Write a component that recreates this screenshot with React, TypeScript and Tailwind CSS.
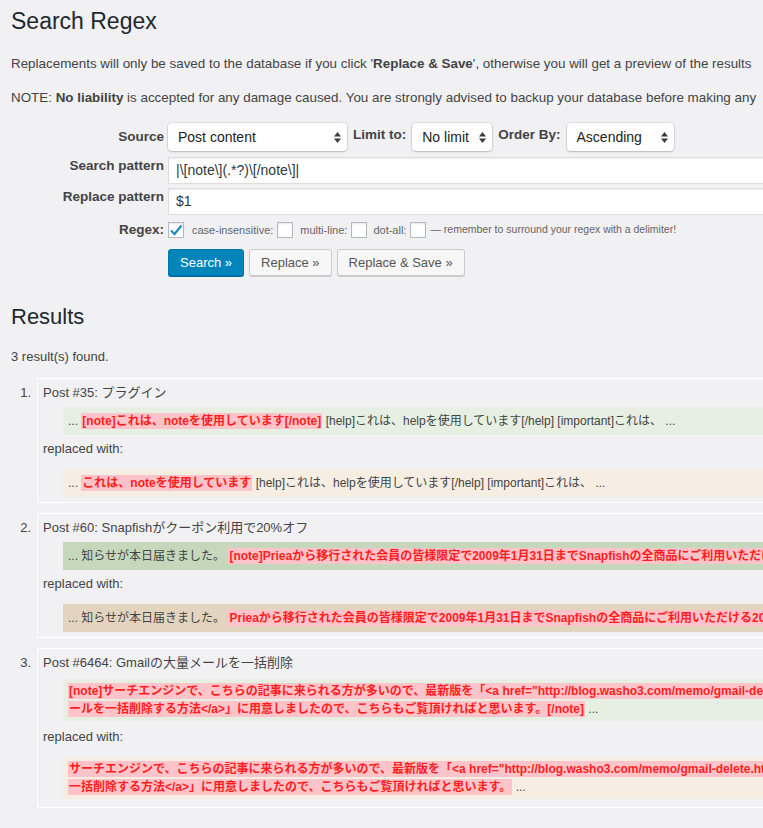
import React from "react";

function Arrows() {
  return (
    <svg width="7" height="11" viewBox="0 0 7 11" className="shrink-0">
      <polygon points="0,4.5 3.5,0 7,4.5" fill="#3a3a3a" />
      <polygon points="0,6.5 3.5,11 7,6.5" fill="#3a3a3a" />
    </svg>
  );
}

function Select({ value, width }: { value: string; width: string }) {
  return (
    <div
      className={`flex h-[28px] ${width} items-center justify-between rounded-[4px] bg-white pl-[10px] pr-[6px] text-[14px] text-[#222] shadow-[0_0_0_1px_rgba(0,0,0,0.07),0_1px_2px_rgba(0,0,0,0.18)]`}
    >
      <span>{value}</span>
      <Arrows />
    </div>
  );
}

function Checkbox({ checked }: { checked?: boolean }) {
  return (
    <div className="flex h-[16px] w-[16px] shrink-0 items-center justify-center border border-[#b4b9be] bg-white shadow-[inset_0_1px_2px_rgba(0,0,0,0.1)]">
      {checked && (
        <svg width="14" height="14" viewBox="0 0 14 14">
          <path d="M2 7.5 L5.5 11 L12.5 2.5" fill="none" stroke="#1e8cbe" strokeWidth="2.2" />
        </svg>
      )}
    </div>
  );
}

function Hit({ children }: { children: React.ReactNode }) {
  return (
    <span className="bg-[#ffc3ca] px-[1px] py-[1px] font-bold text-[#ff1e1e] [box-decoration-break:clone]">
      {children}
    </span>
  );
}

function Result({
  num,
  title,
  search,
  replace,
  searchBg,
  replaceBg,
  tall,
}: {
  num: string;
  title: string;
  search: React.ReactNode;
  replace: React.ReactNode;
  searchBg: string;
  replaceBg: string;
  tall?: boolean;
}) {
  const row = tall ? "py-[3px] leading-[18px]" : "py-[4px] leading-[20px]";
  return (
    <div className="flex">
      <div className="w-[26px] shrink-0 pr-[6px] pt-[5px] text-right text-[13px] leading-[20px]">{num}</div>
      <div className={`w-[1150px] border border-white px-[5px] pt-[4px] ${tall ? "pb-[8px]" : "pb-[5px]"}`}>
        <div className="text-[13px] leading-[20px]">{title}</div>
        <div
          className={`${tall ? "mt-[6px]" : "mt-[4px]"} ml-[20px] whitespace-nowrap pl-[5px] text-[12px] ${row} ${searchBg}`}
        >
          {search}
        </div>
        <div className={`${tall ? "mt-[6px]" : "mt-[4px]"} text-[13px] leading-[20px]`}>replaced with:</div>
        <div className={`mt-[10px] ml-[20px] whitespace-nowrap pl-[5px] text-[12px] ${row} ${replaceBg}`}>
          {replace}
        </div>
      </div>
    </div>
  );
}

export default function App() {
  return (
    <div className="min-h-[828px] w-full overflow-hidden bg-[#f1f0f3] font-['Liberation_Sans','Noto_Sans_CJK_JP',sans-serif] text-[#444]">
      <div className="w-[1250px] pl-[11px] pt-[6px] pb-[20px]">
        <h1 className="text-[23px] leading-[30px] font-normal text-[#23282d]">Search Regex</h1>

        <p className="mt-[18px] text-[13.4px] leading-[20px]">
          Replacements will only be saved to the database if you click '<b>Replace &amp; Save</b>', otherwise you
          will get a preview of the results
        </p>
        <p className="mt-[14px] text-[13.4px] leading-[20px]">
          NOTE: <b>No liability</b> is accepted for any damage caused. You are strongly advised to backup your
          database before making any
        </p>

        <div className="mt-[15px] grid grid-cols-[153px_1fr] gap-x-[4px]">
          <div className="flex h-[28px] items-center justify-end text-[13.5px] font-bold">Source</div>
          <div className="flex items-center gap-[6px]">
            <Select value="Post content" width="w-[179px]" />
            <span className="pb-[3px] text-[13.5px] font-bold">Limit to:</span>
            <Select value="No limit" width="w-[80px]" />
            <span className="pb-[3px] text-[13.5px] font-bold">Order By:</span>
            <Select value="Ascending" width="w-[107px]" />
          </div>

          <div className="mt-[6px] pt-[1px] text-right text-[13.5px] leading-[16px] font-bold">Search pattern</div>
          <div className="mt-[6px] flex h-[27px] w-[900px] items-center border border-[#ddd] bg-white pl-[7px] text-[14px] text-[#32373c] shadow-[inset_0_1px_2px_rgba(0,0,0,0.07)]">
            |\[note\](.*?)\[/note\]|
          </div>

          <div className="mt-[4px] pt-[1px] text-right text-[13.5px] leading-[16px] font-bold">Replace pattern</div>
          <div className="mt-[4px] flex h-[27px] w-[900px] items-center border border-[#ddd] bg-white pl-[7px] text-[14px] text-[#32373c] shadow-[inset_0_1px_2px_rgba(0,0,0,0.07)]">
            $1
          </div>

          <div className="mt-[7px] flex h-[16px] items-center justify-end text-[13.5px] font-bold">Regex:</div>
          <div className="mt-[7px] flex h-[16px] items-center text-[11px] text-[#666]">
            <Checkbox checked />
            <span className="ml-[8px] mr-[4px]">case-insensitive:</span>
            <Checkbox />
            <span className="ml-[7px] mr-[4px]">multi-line:</span>
            <Checkbox />
            <span className="ml-[6px] mr-[4px]">dot-all:</span>
            <Checkbox />
            <span className="ml-[4px] text-[10.5px]">— remember to surround your regex with a delimiter!</span>
          </div>

          <div />
          <div className="mt-[11px] flex gap-[5px] text-[13px]">
            <button className="h-[27px] rounded-[3px] border border-[#0073aa] bg-[#0085ba] px-[11px] text-white shadow-[0_1px_0_#006799]">
              Search »
            </button>
            <button className="h-[27px] rounded-[3px] border border-[#ccc] bg-[#f7f7f7] px-[11px] text-[#555] shadow-[0_1px_0_#ccc]">
              Replace »
            </button>
            <button className="h-[27px] rounded-[3px] border border-[#ccc] bg-[#f7f7f7] px-[11px] text-[#555] shadow-[0_1px_0_#ccc]">
              Replace &amp; Save »
            </button>
          </div>
        </div>

        <h2 className="mt-[26px] text-[22px] leading-[30px] font-normal text-[#23282d]">Results</h2>
        <p className="mt-[15px] text-[13px] leading-[20px]">3 result(s) found.</p>

        <div className="mt-[11px] flex flex-col gap-[10px]">
          <Result
            num="1."
            title="Post #35: プラグイン"
            searchBg="bg-[#e6efe1]"
            replaceBg="bg-[#f6eee3]"
            search={
              <>
                ... <Hit>[note]これは、noteを使用しています[/note]</Hit> [help]これは、helpを使用しています[/help]
                [important]これは、 ...
              </>
            }
            replace={
              <>
                ... <Hit>これは、noteを使用しています</Hit> [help]これは、helpを使用しています[/help]
                [important]これは、 ...
              </>
            }
          />
          <Result
            num="2."
            title="Post #60: Snapfishがクーポン利用で20%オフ"
            searchBg="bg-[#c5d8bc]"
            replaceBg="bg-[#e2d4bf]"
            search={
              <>
                ... 知らせが本日届きました。{" "}
                <Hit>[note]Prieaから移行された会員の皆様限定で2009年1月31日までSnapfishの全商品にご利用いただける20%オフ</Hit>
              </>
            }
            replace={
              <>
                ... 知らせが本日届きました。{" "}
                <Hit>Prieaから移行された会員の皆様限定で2009年1月31日までSnapfishの全商品にご利用いただける20%オフ</Hit>
              </>
            }
          />
          <Result
            num="3."
            title="Post #6464: Gmailの大量メールを一括削除"
            searchBg="bg-[#e6efe1]"
            replaceBg="bg-[#f6eee3]"
            tall
            search={
              <>
                <Hit>
                  [note]サーチエンジンで、こちらの記事に来られる方が多いので、最新版を「&lt;a
                  href="http://blog.washo3.com/memo/gmail-delete.html"&gt;Gmailの大量メ
                  <br />
                  ールを一括削除する方法&lt;/a&gt;」に用意しましたので、こちらもご覧頂ければと思います。[/note]
                </Hit>{" "}
                ...
              </>
            }
            replace={
              <>
                <Hit>
                  サーチエンジンで、こちらの記事に来られる方が多いので、最新版を「&lt;a
                  href="http://blog.washo3.com/memo/gmail-delete.html"&gt;Gmailの大量メールを
                  <br />
                  一括削除する方法&lt;/a&gt;」に用意しましたので、こちらもご覧頂ければと思います。
                </Hit>{" "}
                ...
              </>
            }
          />
        </div>
      </div>
    </div>
  );
}
